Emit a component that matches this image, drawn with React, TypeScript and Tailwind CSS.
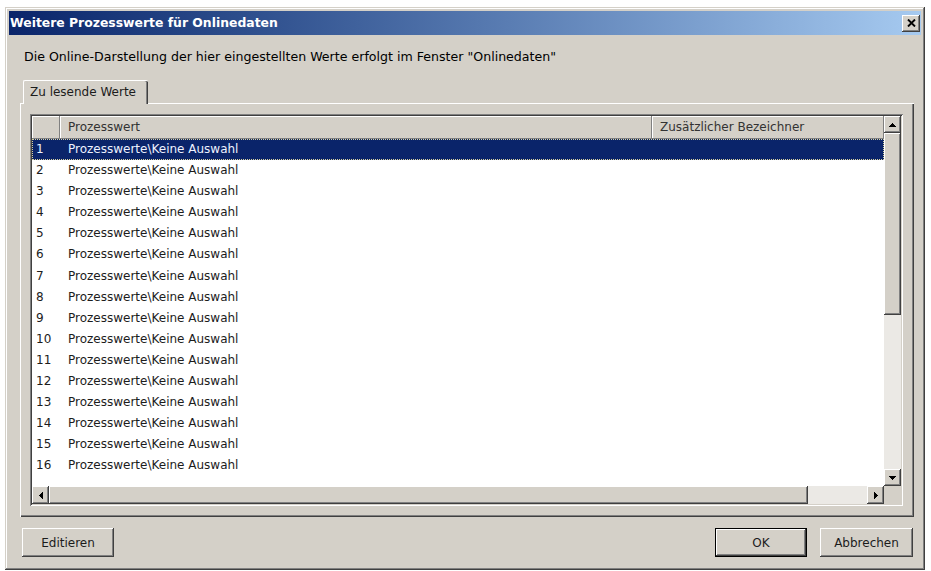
import React from "react";

const raised =
  "shadow-[inset_-1px_-1px_0_#404040,inset_1px_1px_0_#ffffff,inset_-2px_-2px_0_#808080,inset_2px_2px_0_#d4d0c8]";

function Arrow({ dir }: { dir: "up" | "down" | "left" | "right" }) {
  const pts =
    dir === "up"
      ? "3.5,0 7,4 0,4"
      : dir === "down"
      ? "0,0 7,0 3.5,4"
      : dir === "left"
      ? "4,0 4,7 0,3.5"
      : "0,0 4,3.5 0,7";
  const w = dir === "up" || dir === "down" ? 7 : 4;
  const h = dir === "up" || dir === "down" ? 4 : 7;
  return (
    <svg width={w} height={h} viewBox={`0 0 ${w} ${h}`} shapeRendering="crispEdges">
      <polygon points={pts} fill="#000000" />
    </svg>
  );
}

function ScrollBtn({ dir, className }: { dir: "up" | "down" | "left" | "right"; className: string }) {
  return (
    <div className={`${className} bg-[#d4d0c8] flex items-center justify-center ${raised}`}>
      <Arrow dir={dir} />
    </div>
  );
}

export default function App() {
  const rows = Array.from({ length: 16 }, (_, i) => i + 1);
  return (
    <div
      className="w-[931px] h-[571px] bg-white pt-[7px] pl-[5px] overflow-hidden text-[12px] text-[#1c1c1c]"
      style={{ fontFamily: '"DejaVu Sans", "Liberation Sans", sans-serif' }}
    >
      <div className="w-[920px] h-[563px] bg-[#d4d0c8] p-[4px] flex flex-col shadow-[inset_-1px_-1px_0_#404040,inset_1px_1px_0_#d4d0c8,inset_-2px_-2px_0_#808080,inset_2px_2px_0_#ffffff]">
        {/* Title bar */}
        <div className="h-[24px] shrink-0 flex items-center justify-between bg-linear-to-r from-[#0a246a] to-[#a6caf0]">
          <span className="pl-[1px] text-white font-bold text-[12.4px] leading-[24px]">
            Weitere Prozesswerte für Onlinedaten
          </span>
          <div className={`w-[18px] h-[17px] mr-[1px] bg-[#d4d0c8] flex items-center justify-center ${raised}`}>
            <svg width="9" height="8" viewBox="0 0 9 8">
              <path d="M1 0.5 L8 7.5 M8 0.5 L1 7.5" stroke="#000000" strokeWidth="1.9" />
            </svg>
          </div>
        </div>

        {/* Description */}
        <div className="mt-[14px] ml-[15px] h-[16px] leading-[16px] text-[12.6px] text-black">
          Die Online-Darstellung der hier eingestellten Werte erfolgt im Fenster "Onlinedaten"
        </div>

        {/* Tab strip */}
        <div className="mt-[15px] ml-[14px] h-[23px] flex">
          <div className="relative z-10 w-[125px] h-[24px] -mb-px bg-[#d4d0c8] rounded-t-[2px] border-t border-l border-white shadow-[inset_-1px_0_0_#404040,inset_-2px_0_0_#808080] pl-[6px] leading-[23px]">
            Zu lesende Werte
          </div>
        </div>

        {/* Panel */}
        <div className="ml-[11px] w-[894px] h-[414px] pt-[11px] pl-[10px] shadow-[inset_1px_1px_0_#ffffff,inset_-1px_-1px_0_#404040,inset_-2px_-2px_0_#808080]">
          {/* List view */}
          <div className="w-[873px] h-[392px] p-[2px] shadow-[inset_1px_1px_0_#808080,inset_-1px_-1px_0_#ffffff,inset_2px_2px_0_#404040,inset_-2px_-2px_0_#d4d0c8]">
            <div className="w-full h-full grid grid-cols-[1fr_17px] grid-rows-[1fr_18px] bg-white">
              {/* List area */}
              <div className="overflow-hidden flex flex-col">
                <div className="h-[23px] shrink-0 grid grid-cols-[28px_592px_1fr] bg-[#d4d0c8] text-[#333333]">
                  <div className="shadow-[inset_-1px_-1px_0_#808080,inset_1px_1px_0_#ffffff]" />
                  <div className="pl-[8px] leading-[23px] shadow-[inset_-1px_-1px_0_#808080,inset_1px_1px_0_#ffffff]">
                    Prozesswert
                  </div>
                  <div className="pl-[8px] leading-[23px] shadow-[inset_-1px_-1px_0_#808080,inset_1px_1px_0_#ffffff]">
                    Zusätzlicher Bezeichner
                  </div>
                </div>
                {rows.map((n) => {
                  const sel = n === 1;
                  return (
                    <div
                      key={n}
                      className={
                        sel
                          ? "h-[21.1px] shrink-0 grid grid-cols-[28px_592px_1fr] leading-[21px] bg-[#0a246a] text-[#eef2ff] outline-1 outline-dotted outline-[#d8d2a0] -outline-offset-1"
                          : "h-[21.1px] shrink-0 grid grid-cols-[28px_592px_1fr] leading-[21px]"
                      }
                    >
                      <div className="pl-[4px]">{n}</div>
                      <div className="pl-[8px] whitespace-nowrap">Prozesswerte\Keine Auswahl</div>
                      <div />
                    </div>
                  );
                })}
              </div>

              {/* Vertical scrollbar */}
              <div className="flex flex-col bg-[#ebe9e5]">
                <ScrollBtn dir="up" className="h-[17px] shrink-0" />
                <div className={`h-[182px] shrink-0 bg-[#d4d0c8] ${raised}`} />
                <div className="flex-1" />
                <ScrollBtn dir="down" className="h-[17px] shrink-0" />
              </div>

              {/* Horizontal scrollbar */}
              <div className="flex bg-[#ebe9e5]">
                <ScrollBtn dir="left" className="w-[17px] shrink-0" />
                <div className={`w-[759px] shrink-0 bg-[#d4d0c8] ${raised}`} />
                <div className="flex-1" />
                <ScrollBtn dir="right" className="w-[17px] shrink-0" />
              </div>

              {/* Corner */}
              <div className="bg-[#d4d0c8]" />
            </div>
          </div>
        </div>

        {/* Buttons */}
        <div className="mt-[11px] h-[29px] flex">
          <div className={`ml-[13px] w-[92px] h-[29px] bg-[#d4d0c8] flex items-center justify-center ${raised}`}>
            Editieren
          </div>
          <div className="flex-1" />
          <div className="w-[92px] h-[29px] bg-[#d4d0c8] flex items-center justify-center shadow-[inset_0_0_0_1px_#000000,inset_-2px_-2px_0_#404040,inset_2px_2px_0_#ffffff,inset_-3px_-3px_0_#808080]">
            OK
          </div>
          <div className={`ml-[13px] mr-[8px] w-[93px] h-[29px] bg-[#d4d0c8] flex items-center justify-center ${raised}`}>
            Abbrechen
          </div>
        </div>
      </div>
    </div>
  );
}
